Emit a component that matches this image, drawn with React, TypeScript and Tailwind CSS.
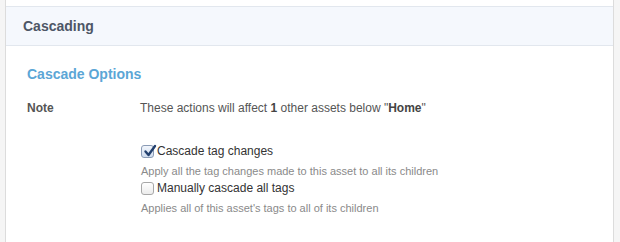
import React from "react"

function Box({ checked }: { checked?: boolean }) {
  return (
    <span
      className={
        checked
          ? "relative mr-[3px] inline-flex h-[13px] w-[13px] shrink-0 items-center justify-center rounded-[3px] border border-[#8a9bb5] bg-gradient-to-b from-[#f2f6fc] to-[#cfdcee]"
          : "relative mr-[3px] inline-flex h-[13px] w-[13px] shrink-0 items-center justify-center rounded-[3px] border border-[#a8a8a8] bg-gradient-to-b from-white to-[#ececec]"
      }
    >
      {checked && (
        <svg viewBox="0 0 14 14" className="absolute left-[1px] top-[-2px] h-[14px] w-[14px]">
          <path d="M2.5 7.5 L5.5 11 L12 2" fill="none" stroke="#23406e" strokeWidth="2.4" strokeLinecap="round" strokeLinejoin="round" />
        </svg>
      )}
    </span>
  )
}

function Option({ label, help, checked }: { label: string; help: string; checked?: boolean }) {
  return (
    <div>
      <label className="flex items-center text-[12px] leading-[16px] text-[#333]">
        <Box checked={checked} />
        {label}
      </label>
      <p className="mt-[5px] text-[11px] leading-[14px] text-[#8a8a8a]">{help}</p>
    </div>
  )
}

export default function App() {
  return (
    <div className="h-[242px] overflow-hidden bg-[#f5f5f5] pl-[5px] pr-[6px] font-['Liberation_Sans',Arial,sans-serif]">
      <div className="h-full border-x border-[#dcdcdc] bg-white pt-[6px]">
        <div className="flex h-[40px] items-center border-y border-[#e2e7ee] bg-[#f5f8fd] pl-[17px]">
          <h2 className="text-[14px] font-bold text-[#4d5666]">Cascading</h2>
        </div>
        <div className="pl-[21px] pt-[18px]">
          <h3 className="text-[14px] font-bold leading-[20px] text-[#5ba6d6]">Cascade Options</h3>
          <div className="mt-[16px] flex text-[12px] leading-[16px]">
            <div className="w-[113px] font-bold text-[#555]">Note</div>
            <div className="text-[#555]">
              These actions will affect <b className="text-[#444]">1</b> other assets below "<b className="text-[#444]">Home</b>"
            </div>
          </div>
          <div className="ml-[114px] mt-[27px] flex flex-col gap-[2px]">
            <Option checked label="Cascade tag changes" help="Apply all the tag changes made to this asset to all its children" />
            <Option label="Manually cascade all tags" help="Applies all of this asset's tags to all of its children" />
          </div>
        </div>
      </div>
    </div>
  )
}
